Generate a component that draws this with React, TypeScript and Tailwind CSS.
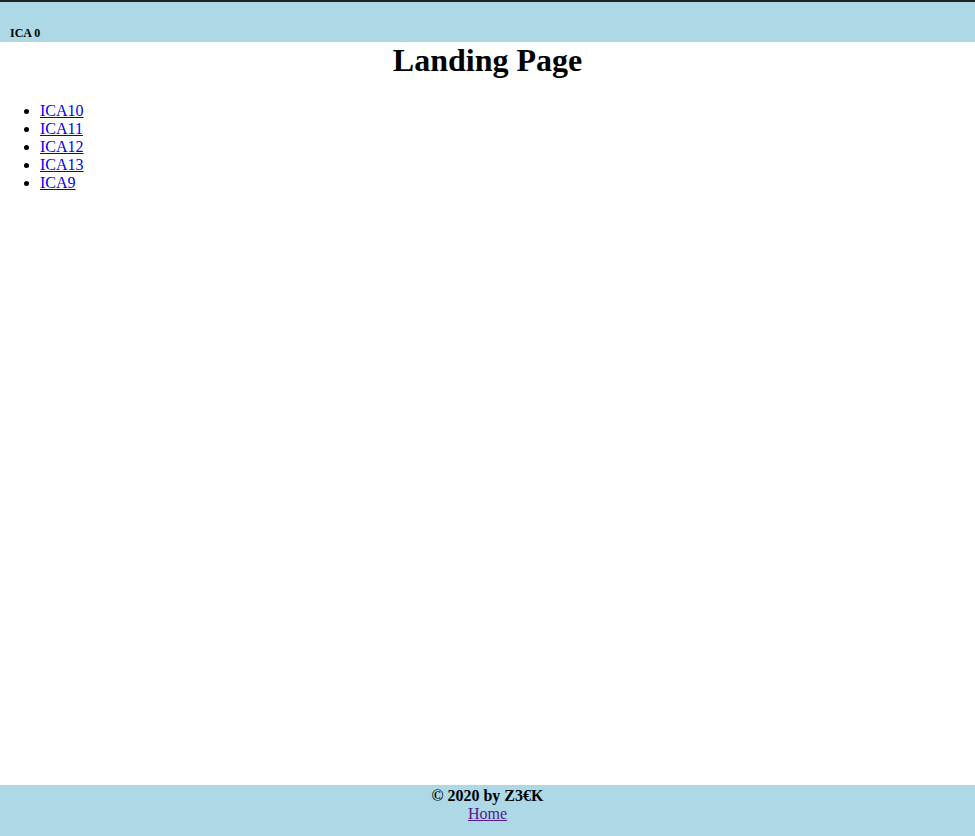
import React from "react";

export default function App() {
  const links = ["ICA10", "ICA11", "ICA12", "ICA13", "ICA9"];
  return (
    <div
      className="min-h-[836px] bg-white text-black"
      style={{ fontFamily: '"Liberation Serif", "Times New Roman", serif' }}
    >
      <header className="box-border h-[42px] border-t-2 border-[#222222] bg-[#add8e6] pl-[10px] pt-[25px]">
        <h6 className="m-0 text-[12px] font-bold leading-[1.15]">ICA 0</h6>
      </header>
      <h1 className="m-0 text-center text-[32px] font-bold leading-[1.15]">Landing Page</h1>
      <ul className="mt-[23px] list-disc pl-[40px] text-[16px] leading-[18px]">
        {links.map((l) => (
          <li key={l}>
            <a href="#" className="text-[#0000ee] underline">
              {l}
            </a>
          </li>
        ))}
      </ul>
      <footer className="fixed bottom-0 left-0 right-0 box-border h-[51px] bg-[#add8e6] pt-[2px] text-center text-[16px] leading-[1.15]">
        <div className="font-bold">© 2020 by Z3€K</div>
        <a href="#" className="text-[#551a8b] underline">
          Home
        </a>
      </footer>
    </div>
  );
}
